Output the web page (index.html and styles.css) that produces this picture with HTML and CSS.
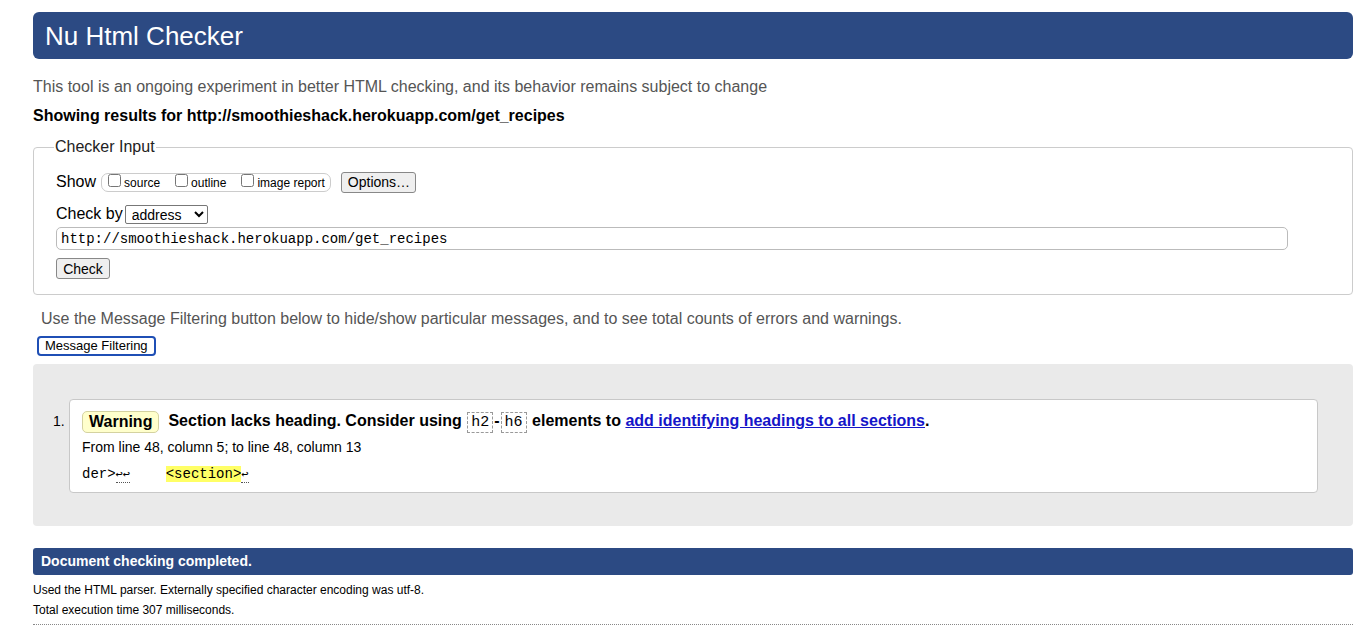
FILE: index.html
```html
<!DOCTYPE html>
<html>
<head>
<meta charset="utf-8">
<title>Nu Html Checker</title>
<link rel="stylesheet" href="styles.css">
</head>
<body>
<div class="page">
  <header class="banner"><h1 class="title">Nu Html Checker</h1></header>
  <p class="intro">This tool is an ongoing experiment in better HTML checking, and its behavior remains subject to change</p>
  <p class="showing">Showing results for http://smoothieshack.herokuapp.com/get_recipes</p>
  <fieldset class="checker">
    <legend class="legend">Checker Input</legend>
    <div class="row show-row">
      <span class="lbl">Show</span>
      <span class="opts">
        <label class="opt"><input type="checkbox" class="cb">source</label>
        <label class="opt"><input type="checkbox" class="cb">outline</label>
        <label class="opt"><input type="checkbox" class="cb">image report</label>
      </span>
      <button class="btn options-btn">Options…</button>
    </div>
    <div class="row by-row">
      <span class="lbl">Check by</span>
      <select class="sel"><option>address</option></select>
    </div>
    <input class="url" type="text" value="http://smoothieshack.herokuapp.com/get_recipes">
    <div class="row"><button class="btn check-btn">Check</button></div>
  </fieldset>
  <p class="filter-note">Use the Message Filtering button below to hide/show particular messages, and to see total counts of errors and warnings.</p>
  <button class="btn filter-btn">Message Filtering</button>
  <div class="results">
    <ol class="msgs">
      <li class="msg">
        <p class="msg-head"><span class="badge">Warning</span><span class="msg-text">Section lacks heading. Consider using <code class="tag">h2</code>-<code class="tag">h6</code> elements to <a class="link" href="#">add identifying headings to all sections</a>.</span></p>
        <p class="loc">From line 48, column 5; to line 48, column 13</p>
        <p class="extract"><code class="ex">der&gt;<span class="lf">↩↩</span>    <mark class="hl">&lt;section&gt;</mark><span class="lf">↩</span></code></p>
      </li>
    </ol>
  </div>
  <div class="done">Document checking completed.</div>
  <p class="details first">Used the HTML parser. Externally specified character encoding was utf-8.</p>
  <p class="details">Total execution time 307 milliseconds.</p>
  <hr class="rule">
</div>
</body>
</html>
```
FILE: styles.css
```css
html, body { margin: 0; padding: 0; background: #fff; }
body { font-family: "Liberation Sans", Arial, Helvetica, sans-serif; color: #000; font-size: 16px; }
.page { padding: 12px 12px 0 33px; width: 1320px; }
.banner { background: #2c4a83; border-radius: 6px; height: 47px; display: flex; align-items: center; padding-left: 12px; }
.title { margin: 0; color: #fff; font-weight: normal; font-size: 26px; line-height: 30px; }
.intro { margin: 19px 0 0; color: #555; font-size: 16px; line-height: 18px; }
.showing { margin: 11px 0 0; font-weight: bold; font-size: 16px; line-height: 18px; }
.checker { margin: 13px 0 0; border: 1px solid #ccc; border-radius: 4px; padding: 6px 22px 15px 22px; }
.legend { padding: 0 1px; font-size: 16px; line-height: 18px; color: #222; margin-left: -2px; }
.row { display: flex; align-items: center; }
.lbl { font-size: 16px; }
.show-row { height: 22px; margin-top: 9px; }
.opts { display: inline-flex; align-items: center; border: 1px solid #ccc; border-radius: 7px; height: 17px; padding: 0 5px 0 6px; margin-left: 5px; }
.opt { font-size: 12px; display: inline-flex; align-items: center; margin-right: 15px; position: relative; top: 1px; }
.opt:last-child { margin-right: 0; }
.cb { width: 13px; height: 13px; margin: 0 3px 0 0; position: relative; top: -3px; }
.btn { font-family: "Liberation Sans", Arial, sans-serif; font-size: 14px; background: #efefef; border: 1px solid #888; border-radius: 3px; color: #000; padding: 1px 6px; line-height: 16px; }
.options-btn { margin-left: 10px; height: 21px; width: 75px; }
.by-row { margin-top: 11px; height: 20px; }
.sel { margin-left: 2px; width: 83px; height: 19px; font-size: 14px; font-family: "Liberation Sans", Arial, sans-serif; border: 1px solid #777; border-radius: 2px; background: #fff; padding: 0 2px; }
.url { display: block; box-sizing: border-box; width: 1232px; height: 23px; margin-top: 3px; border: 1px solid #bbb; border-radius: 5px; padding: 0 4px; font-family: "Liberation Mono", "Courier New", monospace; font-size: 14px; color: #000; }
.check-btn { margin-top: 8px; height: 21px; width: 54px; font-size: 14px; }
.filter-note { margin: 15px 0 0 8px; color: #555; font-size: 16px; line-height: 18px; }
.filter-btn { margin-top: 8px; margin-left: 4px; height: 20px; border: 2px solid #1f4fb5; border-radius: 4px; background: #fff; padding: 0 6px; font-size: 13px; line-height: 16px; }
.results { background: #eaeaea; border-radius: 4px; margin-top: 8px; height: 162px; padding-top: 35px; box-sizing: border-box; }
.msgs { margin: 0; padding: 0 35px 0 36px; list-style: none; }
.msg { position: relative; background: #fff; border: 1px solid #c8c8c8; border-radius: 4px; height: 94px; box-sizing: border-box; padding: 10px 12px 0 12px; }
.msg::before { content: "1."; position: absolute; left: -17px; top: 13px; font-size: 14px; }
.msg-head { margin: 0; display: flex; align-items: center; font-weight: bold; font-size: 16px; line-height: 22px; }
.badge { background: #ffffcc; border: 1px solid #d4d2a0; border-radius: 5px; padding: 0 6px; height: 20px; line-height: 20px; margin-right: 9px; }
.msg-text { white-space: nowrap; }
.tag { font-family: "Liberation Mono", "Courier New", monospace; font-weight: normal; font-size: 15px; border: 1px dashed #999; padding: 1px 3px; margin: 0 1px; }
.link { color: #1515c8; }
.loc { margin: 5px 0 0; font-size: 14px; line-height: 16px; }
.extract { margin: 9px 0 0; font-size: 14px; line-height: 18px; }
.ex { font-family: "Liberation Mono", "Courier New", monospace; font-size: 14px; white-space: pre; }
.lf { font-size: 12px; border-bottom: 1px dotted #555; }
.hl { background: #ffff66; color: #000; margin-left: 2px; }
.done { margin-top: 22px; background: #2c4a83; color: #fff; font-weight: bold; font-size: 14px; height: 27px; line-height: 27px; padding-left: 8px; border-radius: 3px; }
.details { margin: 6px 0 0; font-size: 12px; line-height: 14px; }
.details.first { margin-top: 8px; }
.rule { margin: 7px 0 0; border: 0; border-top: 1px dotted #888; }
```
